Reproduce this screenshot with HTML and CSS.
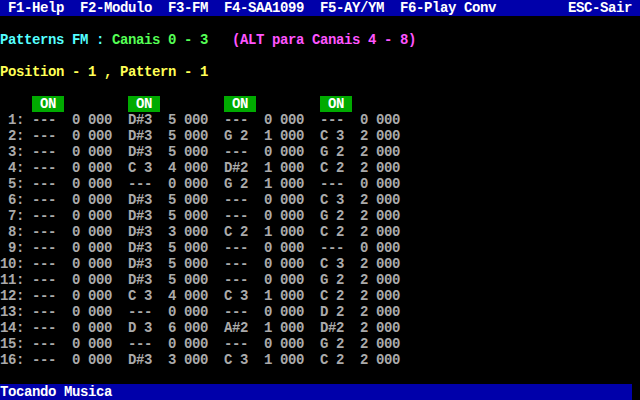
FILE: index.html
```html
<!DOCTYPE html>
<html>
<head>
<meta charset="utf-8">
<link rel="stylesheet" href="styles.css">
</head>
<body>
<div class="screen">
  <div class="line bar top"><span> F1-Help  F2-Modulo  F3-FM  F4-SAA1099  F5-AY/YM  F6-Play Conv</span><span>ESC-Sair </span></div>
  <div class="line"></div>
  <div class="line"><span class="cyan">Patterns FM : </span><span class="green">Canais 0 - 3</span>   <span class="magenta">(ALT para Canais 4 - 8)</span></div>
  <div class="line"></div>
  <div class="line yellow">Position - 1 , Pattern - 1</div>
  <div class="line"></div>
  <div class="line">    <span class="on"> ON </span>        <span class="on"> ON </span>        <span class="on"> ON </span>        <span class="on"> ON </span></div>
  <div class="rows">
    <div class="line"> 1: ---  0 000  D#3  5 000  ---  0 000  ---  0 000</div>
    <div class="line"> 2: ---  0 000  D#3  5 000  G 2  1 000  C 3  2 000</div>
    <div class="line"> 3: ---  0 000  D#3  5 000  ---  0 000  G 2  2 000</div>
    <div class="line"> 4: ---  0 000  C 3  4 000  D#2  1 000  C 2  2 000</div>
    <div class="line"> 5: ---  0 000  ---  0 000  G 2  1 000  ---  0 000</div>
    <div class="line"> 6: ---  0 000  D#3  5 000  ---  0 000  C 3  2 000</div>
    <div class="line"> 7: ---  0 000  D#3  5 000  ---  0 000  G 2  2 000</div>
    <div class="line"> 8: ---  0 000  D#3  3 000  C 2  1 000  C 2  2 000</div>
    <div class="line"> 9: ---  0 000  D#3  5 000  ---  0 000  ---  0 000</div>
    <div class="line">10: ---  0 000  D#3  5 000  ---  0 000  C 3  2 000</div>
    <div class="line">11: ---  0 000  D#3  5 000  ---  0 000  G 2  2 000</div>
    <div class="line">12: ---  0 000  C 3  4 000  C 3  1 000  C 2  2 000</div>
    <div class="line">13: ---  0 000  ---  0 000  ---  0 000  D 2  2 000</div>
    <div class="line">14: ---  0 000  D 3  6 000  A#2  1 000  D#2  2 000</div>
    <div class="line">15: ---  0 000  ---  0 000  ---  0 000  G 2  2 000</div>
    <div class="line">16: ---  0 000  D#3  3 000  C 3  1 000  C 2  2 000</div>
  </div>
  <div class="line"></div>
  <div class="line bar status">Tocando Musica</div>
</div>
</body>
</html>
```
FILE: styles.css
```css
html, body {
  margin: 0;
  padding: 0;
  background: #000;
}
.screen {
  width: 640px;
  height: 400px;
  overflow: hidden;
  background: #000;
  color: #aaaaaa;
  font-family: "Liberation Mono", "DejaVu Sans Mono", monospace;
  font-weight: bold;
  font-size: 14px;
  letter-spacing: -0.4px;
  display: flex;
  flex-direction: column;
}
.line {
  height: 16px;
  line-height: 16px;
  white-space: pre;
}
.bar {
  background: #0000aa;
  color: #ffffff;
}
.top {
  display: flex;
  justify-content: space-between;
  width: 640px;
}
.status {
  width: 632px;
}
.cyan { color: #55ffff; }
.green { color: #55ff55; }
.magenta { color: #ff55ff; }
.yellow { color: #ffff55; }
.on {
  background: #00aa00;
  color: #ffffff;
  display: inline-block;
  height: 16px;
}
.rows {
  color: #aaaaaa;
}
```
